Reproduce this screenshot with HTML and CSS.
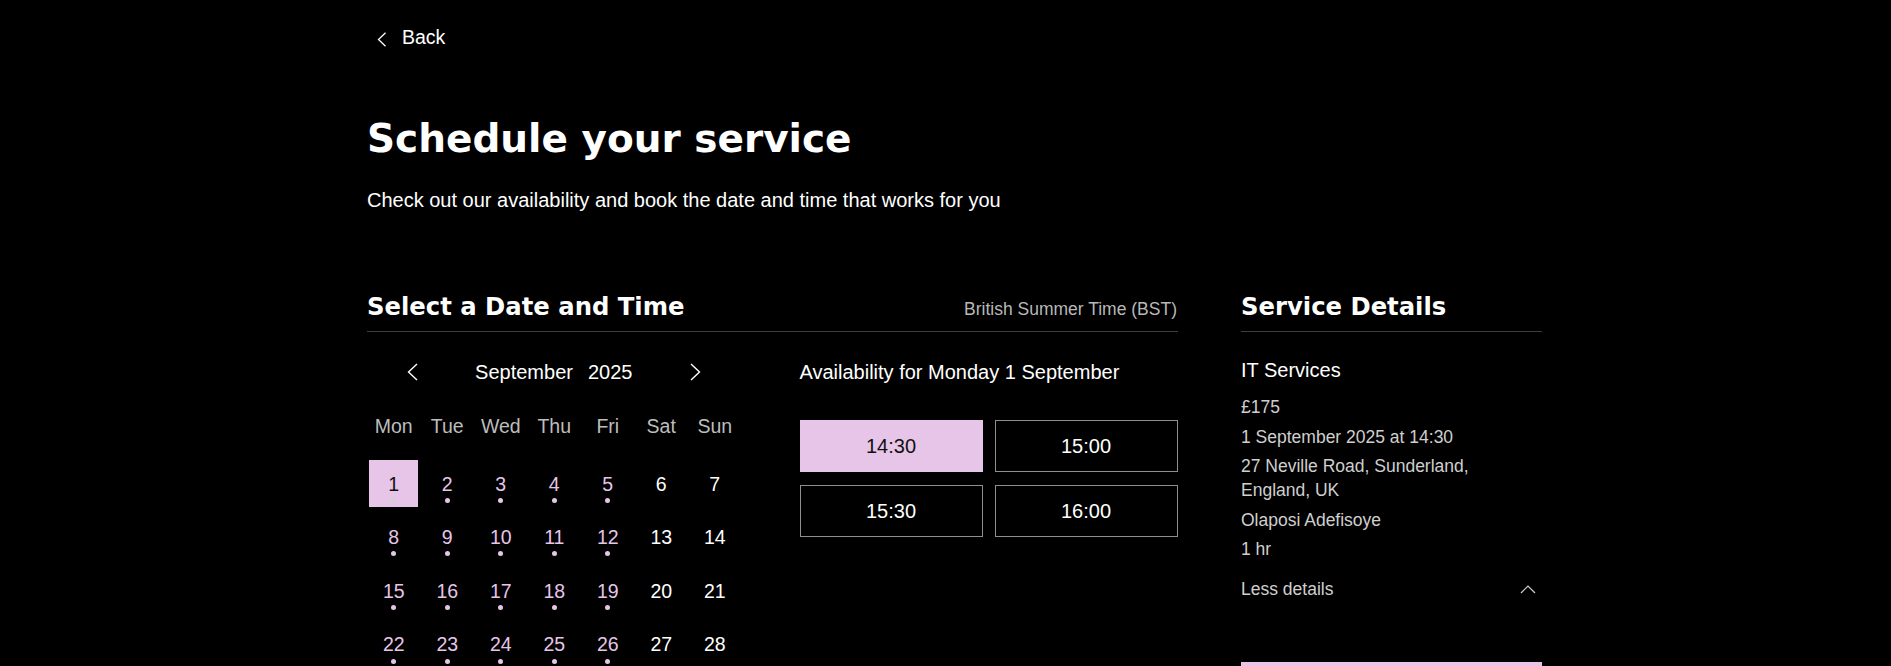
FILE: index.html
```html
<!DOCTYPE html>
<html lang="en">
<head>
<meta charset="utf-8">
<title>Schedule your service</title>
<link rel="stylesheet" href="styles.css">
</head>
<body>
<div class="page">
  <a class="back" href="#">
    <svg class="back-icon" width="10" height="15" viewBox="0 0 10 15"><polyline points="8.5,0.8 1.5,7.5 8.5,14.2" fill="none" stroke="#fff" stroke-width="1.3"/></svg>
    <span>Back</span>
  </a>
  <h1 class="title">Schedule your service</h1>
  <p class="subtitle">Check out our availability and book the date and time that works for you</p>

  <div class="booking">
    <section class="picker">
      <div class="section-head">
        <h2 class="section-title">Select a Date and Time</h2>
        <span class="tz">British Summer Time (BST)</span>
      </div>
      <div class="picker-body">
        <div class="calendar">
          <div class="cal-nav">
            <button class="nav-btn" aria-label="Previous month"><svg width="11" height="18" viewBox="0 0 11 18"><polyline points="10,1 1.5,9 10,17" fill="none" stroke="#fff" stroke-width="1.4"/></svg></button>
            <div class="month"><span>September</span><span>2025</span></div>
            <button class="nav-btn" aria-label="Next month"><svg width="11" height="18" viewBox="0 0 11 18"><polyline points="1,1 9.5,9 1,17" fill="none" stroke="#fff" stroke-width="1.4"/></svg></button>
          </div>
          <div class="weekdays">
            <span>Mon</span><span>Tue</span><span>Wed</span><span>Thu</span><span>Fri</span><span>Sat</span><span>Sun</span>
          </div>
          <div class="days">
            <div class="day selected"><span>1</span><i class="dot"></i></div>
            <div class="day avail"><span>2</span><i class="dot"></i></div>
            <div class="day avail"><span>3</span><i class="dot"></i></div>
            <div class="day avail"><span>4</span><i class="dot"></i></div>
            <div class="day avail"><span>5</span><i class="dot"></i></div>
            <div class="day"><span>6</span></div>
            <div class="day"><span>7</span></div>
            <div class="day avail"><span>8</span><i class="dot"></i></div>
            <div class="day avail"><span>9</span><i class="dot"></i></div>
            <div class="day avail"><span>10</span><i class="dot"></i></div>
            <div class="day avail"><span>11</span><i class="dot"></i></div>
            <div class="day avail"><span>12</span><i class="dot"></i></div>
            <div class="day"><span>13</span></div>
            <div class="day"><span>14</span></div>
            <div class="day avail"><span>15</span><i class="dot"></i></div>
            <div class="day avail"><span>16</span><i class="dot"></i></div>
            <div class="day avail"><span>17</span><i class="dot"></i></div>
            <div class="day avail"><span>18</span><i class="dot"></i></div>
            <div class="day avail"><span>19</span><i class="dot"></i></div>
            <div class="day"><span>20</span></div>
            <div class="day"><span>21</span></div>
            <div class="day avail"><span>22</span><i class="dot"></i></div>
            <div class="day avail"><span>23</span><i class="dot"></i></div>
            <div class="day avail"><span>24</span><i class="dot"></i></div>
            <div class="day avail"><span>25</span><i class="dot"></i></div>
            <div class="day avail"><span>26</span><i class="dot"></i></div>
            <div class="day"><span>27</span></div>
            <div class="day"><span>28</span></div>
            <div class="day avail"><span>29</span><i class="dot"></i></div>
            <div class="day avail"><span>30</span><i class="dot"></i></div>
          </div>
        </div>
        <div class="slots-col">
          <h3 class="avail-title">Availability for Monday 1 September</h3>
          <div class="slots">
            <button class="slot selected">14:30</button>
            <button class="slot">15:00</button>
            <button class="slot">15:30</button>
            <button class="slot">16:00</button>
          </div>
        </div>
      </div>
    </section>

    <aside class="details">
      <div class="section-head">
        <h2 class="section-title">Service Details</h2>
      </div>
      <div class="details-body">
        <h3 class="service-name">IT Services</h3>
        <ul class="info">
          <li>£175</li>
          <li>1 September 2025 at 14:30</li>
          <li>27 Neville Road, Sunderland,<br>England, UK</li>
          <li>Olaposi Adefisoye</li>
          <li>1 hr</li>
        </ul>
        <button class="less">
          <span>Less details</span>
          <svg width="16" height="9" viewBox="0 0 16 9"><polyline points="1,8 8,1 15,8" fill="none" stroke="#cfcfcf" stroke-width="1.2"/></svg>
        </button>
        <button class="next-btn">Next</button>
      </div>
    </aside>
  </div>
</div>
</body>
</html>
```

FILE: styles.css
```css
* { box-sizing: border-box; }
html, body { margin: 0; padding: 0; background: #000; }
body {
  color: #fff;
  font-family: "Liberation Sans", Arial, Helvetica, sans-serif;
  overflow: hidden;
}
button {
  font-family: inherit;
  background: none;
  border: 0;
  padding: 0;
  color: inherit;
  cursor: pointer;
}
.page {
  margin-left: 367px;
  width: 1175px;
  padding-top: 25px;
}
.back {
  display: flex;
  align-items: center;
  gap: 15px;
  padding-left: 10px;
  color: #fff;
  text-decoration: none;
  font-size: 19.5px;
  line-height: 24px;
}
.back-icon { margin-top: 4px; }
.title {
  margin: 66px 0 0;
  font-family: "DejaVu Sans", sans-serif;
  font-weight: 700;
  font-size: 39px;
  line-height: 48px;
}
.subtitle {
  margin: 24.5px 0 0;
  font-size: 20px;
  line-height: 24px;
}
.booking {
  display: flex;
  gap: 63px;
  margin-top: 79.5px;
}
.picker { width: 811px; }
.details { width: 301px; }
.section-head {
  display: flex;
  justify-content: space-between;
  align-items: baseline;
  padding-bottom: 8px;
  border-bottom: 1px solid #3d3d3d;
}
.section-title {
  margin: 0;
  font-family: "DejaVu Sans", sans-serif;
  font-weight: 700;
  font-size: 24.3px;
  line-height: 32px;
}
.tz {
  font-size: 17.5px;
  color: #b8b8b8;
  padding-right: 1px;
}
.picker-body {
  display: flex;
  gap: 58px;
  margin-top: 24px;
}
.calendar { width: 374.5px; }
.cal-nav {
  display: flex;
  align-items: center;
  justify-content: space-between;
  height: 32px;
  padding: 0 41px 0 40px;
}
.nav-btn { display: flex; }
.month {
  display: flex;
  gap: 15px;
  font-size: 20px;
  line-height: 32px;
}
.weekdays {
  display: grid;
  grid-template-columns: repeat(7, 1fr);
  margin-top: 25.5px;
  font-size: 19.5px;
  line-height: 24px;
  color: #bdbdbd;
  text-align: center;
}
.days {
  display: grid;
  grid-template-columns: repeat(7, 1fr);
  grid-auto-rows: 47px;
  row-gap: 6.67px;
  margin-top: 22px;
}
.day {
  justify-self: center;
  width: 49px;
  display: flex;
  flex-direction: column;
  align-items: center;
  padding-top: 14px;
  font-size: 19.5px;
  line-height: 20px;
  color: #fff;
}
.day.avail { color: #e7c5e9; }
.day.selected { background: #e7c5e9; color: #111; }
.dot {
  width: 5px;
  height: 5px;
  margin-top: 4.3px;
  border-radius: 50%;
  background: #e7c5e9;
}
.day.selected .dot { background: #d2d2d2; }
.avail-title {
  margin: 0;
  font-weight: 400;
  font-size: 20px;
  line-height: 32px;
}
.slots {
  display: grid;
  grid-template-columns: 183px 183px;
  column-gap: 12px;
  row-gap: 13px;
  margin-top: 32px;
}
.slot {
  height: 52px;
  border: 1px solid #8f8f8f;
  font-size: 20px;
  line-height: 50px;
  color: #fff;
  text-align: center;
}
.slot.selected {
  background: #e7c5e9;
  border-color: #e7c5e9;
  color: #111;
}
.details-body {
  margin-top: 24px;
}
.service-name {
  margin: 0;
  font-weight: 400;
  font-size: 20px;
  line-height: 28px;
}
.info {
  list-style: none;
  margin: 11px 0 0;
  padding: 0;
  display: flex;
  flex-direction: column;
  gap: 5.5px;
  font-size: 17.5px;
  line-height: 24px;
  color: #cfcfcf;
}
.less {
  display: flex;
  align-items: center;
  justify-content: space-between;
  width: 100%;
  margin-top: 16px;
  padding-right: 6px;
  font-size: 17.5px;
  line-height: 24px;
  color: #cfcfcf;
  text-align: left;
}
.next-btn {
  display: block;
  width: 100%;
  height: 48px;
  margin-top: 61px;
  background: #e7c5e9;
  color: #111;
  font-size: 18px;
}
```
